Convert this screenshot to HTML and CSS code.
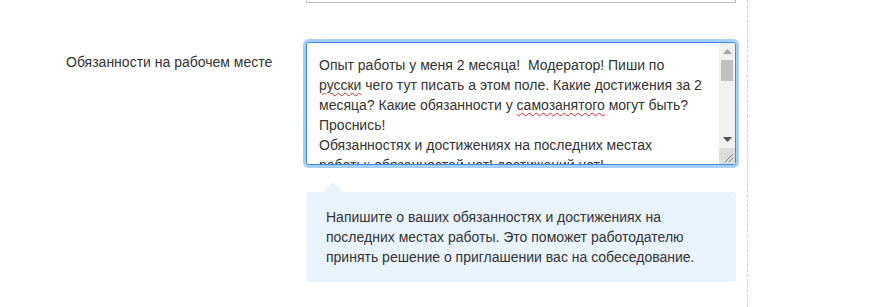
FILE: index.html
```html
<!DOCTYPE html>
<html>
<head>
    <title>Опыт работы</title>
    <link rel="stylesheet" href="styles.css">
</head>
<body>
    <div class="form">
        <div class="prev-field"></div>

        <div class="row">
            <div class="label">Обязанности на рабочем месте</div>
            <div class="control">
                <div class="textarea">
                    <div class="textarea-text">
                        Опыт работы у меня 2 месяца!&nbsp; Модератор! Пиши по<br>
                        <span class="typo">русски</span> чего тут писать а этом поле. Какие достижения за 2<br>
                        месяца? Какие обязанности у <span class="typo">самозанятого</span> могут быть?<br>
                        Проснись!<br>
                        Обязанностях и достижениях на последних местах<br>
                        работы: обязанностей нет! достижений нет!
                    </div>
                    <div class="scrollbar">
                        <div class="sb-btn">
                            <svg width="9" height="5" viewBox="0 0 9 5"><path d="M0 5 L4.5 0 L9 5 Z" fill="#a3a3a3"/></svg>
                        </div>
                        <div class="sb-track"><div class="sb-thumb"></div></div>
                        <div class="sb-btn">
                            <svg width="9" height="5" viewBox="0 0 9 5"><path d="M0 0 L4.5 5 L9 0 Z" fill="#505050"/></svg>
                        </div>
                        <div class="sb-resize">
                            <svg width="16" height="16" viewBox="0 0 16 16">
                                <path d="M14 6 L6 14 M14 10 L10 14" stroke="#808080" stroke-width="1"/>
                            </svg>
                        </div>
                    </div>
                </div>

                <div class="hint">
                    Напишите о ваших обязанностях и достижениях на<br>
                    последних местах работы. Это поможет работодателю<br>
                    принять решение о приглашении вас на собеседование.
                </div>
            </div>
        </div>
    </div>
</body>
</html>
```

FILE: styles.css
```css
body {
    margin: 0;
    background-color: #fff;
    font-family: "Liberation Sans", Arial, sans-serif;
    font-size: 14px;
    line-height: 20px;
    color: #333;
}

.form {
    box-sizing: border-box;
    width: 748px;
    height: 100vh;
    padding-left: 66px;
    border-right: 1px dashed #d0d0d0;
}

.prev-field {
    margin-left: 240px;
    width: 430px;
    height: 2px;
    box-sizing: content-box;
    border: 1px solid #bdbdbd;
    border-top: none;
    width: 428px;
}

.row {
    display: flex;
    margin-top: 39px;
}

.label {
    width: 240px;
    padding-top: 10px;
}

.control {
    width: 430px;
}

.textarea {
    display: flex;
    box-sizing: border-box;
    height: 123px;
    border: 1px solid #3a8ee2;
    border-radius: 3px;
    box-shadow: 0 0 0 3px #a4cef5;
    overflow: hidden;
    background-color: #fff;
}

.textarea-text {
    flex: 1;
    padding: 12px 12px 0;
    overflow: hidden;
    white-space: nowrap;
}

.typo {
    text-decoration: underline wavy #e0201c;
    text-decoration-thickness: 1px;
    text-underline-offset: 2px;
}

.scrollbar {
    width: 16px;
    display: flex;
    flex-direction: column;
    background-color: #f1f1f1;
}

.sb-btn {
    height: 17px;
    display: flex;
    align-items: center;
    justify-content: center;
}

.sb-track {
    flex: 1;
}

.sb-thumb {
    height: 21px;
    margin: 0 2px;
    background-color: #c1c1c1;
}

.sb-resize {
    height: 16px;
    background-color: #dcdcdc;
}

.sb-resize svg {
    display: block;
}

.hint {
    position: relative;
    margin-top: 27px;
    padding: 15px 20px;
    background-color: #e8f3fe;
    border-radius: 3px;
}

.hint::before {
    content: "";
    position: absolute;
    top: -10px;
    left: 17px;
    border-left: 10px solid transparent;
    border-right: 10px solid transparent;
    border-bottom: 10px solid #e8f3fe;
}
```
